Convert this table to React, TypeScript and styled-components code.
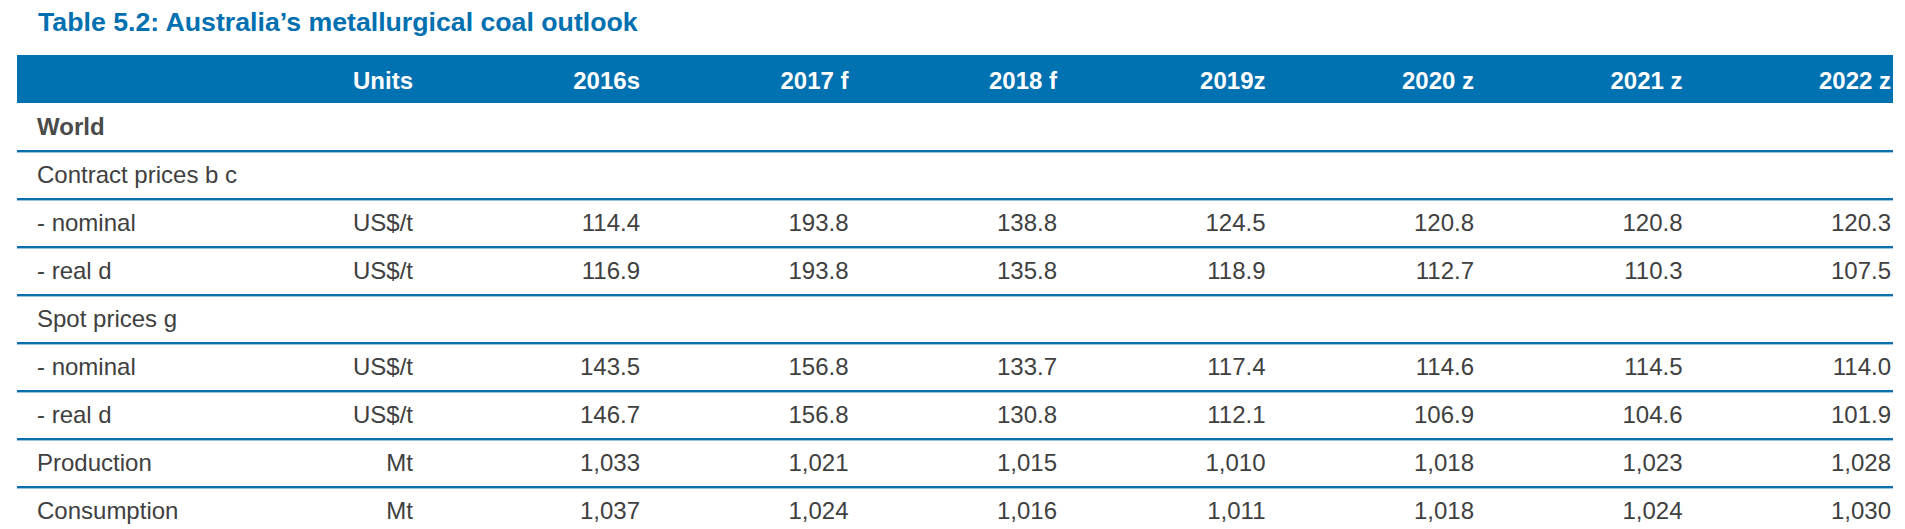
import React from "react";
import styled, { createGlobalStyle } from "styled-components";

const GlobalStyle = createGlobalStyle`
  html, body { margin: 0; padding: 0; background: #ffffff; }
  body { font-family: "Liberation Sans", Arial, sans-serif; }
`;

const Page = styled.div`
  padding: 8px 12px 0 17px;
  width: 1876px;
`;

const Title = styled.h1`
  margin: 0 0 17px 0;
  padding-left: 21px;
  font-family: "Liberation Sans", Arial, sans-serif;
  font-size: 26.7px;
  font-weight: 700;
  line-height: 29.6px;
  color: #0070b0;
`;

const Table = styled.div`
  display: flex;
  flex-direction: column;
  width: 1876px;
`;

const COLS = "316.5px 100px repeat(7, 208.5px)";

const HeaderRow = styled.div`
  display: grid;
  grid-template-columns: ${COLS};
  height: 48px;
  align-items: center;
  background: #0071b1;
  color: #ffffff;
  font-size: 24px;
  font-weight: 700;
  box-sizing: border-box;
  padding-top: 5px;
`;

const Row = styled.div<{ $first?: boolean }>`
  display: grid;
  grid-template-columns: ${COLS};
  height: ${(p) => (p.$first ? 49 : 48)}px;
  box-sizing: border-box;
  align-items: center;
  border-bottom: 2px solid #0b6fb0;
  box-shadow: 0 1px 0 #9cc4e4;
  padding-top: 1px;
  color: #404040;
  font-size: 24px;
`;

const Label = styled.div<{ $bold?: boolean }>`
  padding-left: 20px;
  font-weight: ${(p) => (p.$bold ? 700 : 400)};
  color: ${(p) => (p.$bold ? "#4a4a4a" : "inherit")};
  white-space: nowrap;
`;

const Unit = styled.div`
  text-align: right;
  padding-right: 20.5px;
  white-space: nowrap;
`;

const Value = styled.div`
  text-align: right;
  padding-right: 2px;
  white-space: nowrap;
`;

type RowData = {
  label: string;
  bold?: boolean;
  unit?: string;
  values?: string[];
};

const years = ["2016s", "2017 f", "2018 f", "2019z", "2020 z", "2021 z", "2022 z"];

const rows: RowData[] = [
  { label: "World", bold: true },
  { label: "Contract prices b c" },
  { label: "- nominal", unit: "US$/t", values: ["114.4", "193.8", "138.8", "124.5", "120.8", "120.8", "120.3"] },
  { label: "- real d", unit: "US$/t", values: ["116.9", "193.8", "135.8", "118.9", "112.7", "110.3", "107.5"] },
  { label: "Spot prices g" },
  { label: "- nominal", unit: "US$/t", values: ["143.5", "156.8", "133.7", "117.4", "114.6", "114.5", "114.0"] },
  { label: "- real d", unit: "US$/t", values: ["146.7", "156.8", "130.8", "112.1", "106.9", "104.6", "101.9"] },
  { label: "Production", unit: "Mt", values: ["1,033", "1,021", "1,015", "1,010", "1,018", "1,023", "1,028"] },
  { label: "Consumption", unit: "Mt", values: ["1,037", "1,024", "1,016", "1,011", "1,018", "1,024", "1,030"] },
];

export default function App() {
  return (
    <>
      <GlobalStyle />
      <Page>
        <Title>Table 5.2: Australia’s metallurgical coal outlook</Title>
        <Table>
          <HeaderRow>
            <Label />
            <Unit>Units</Unit>
            {years.map((y) => (
              <Value key={y}>{y}</Value>
            ))}
          </HeaderRow>
          {rows.map((r, i) => (
            <Row key={i} $first={i === 0}>
              <Label $bold={r.bold}>{r.label}</Label>
              <Unit>{r.unit ?? ""}</Unit>
              {(r.values ?? Array(7).fill("")).map((v, j) => (
                <Value key={j}>{v}</Value>
              ))}
            </Row>
          ))}
        </Table>
      </Page>
    </>
  );
}
